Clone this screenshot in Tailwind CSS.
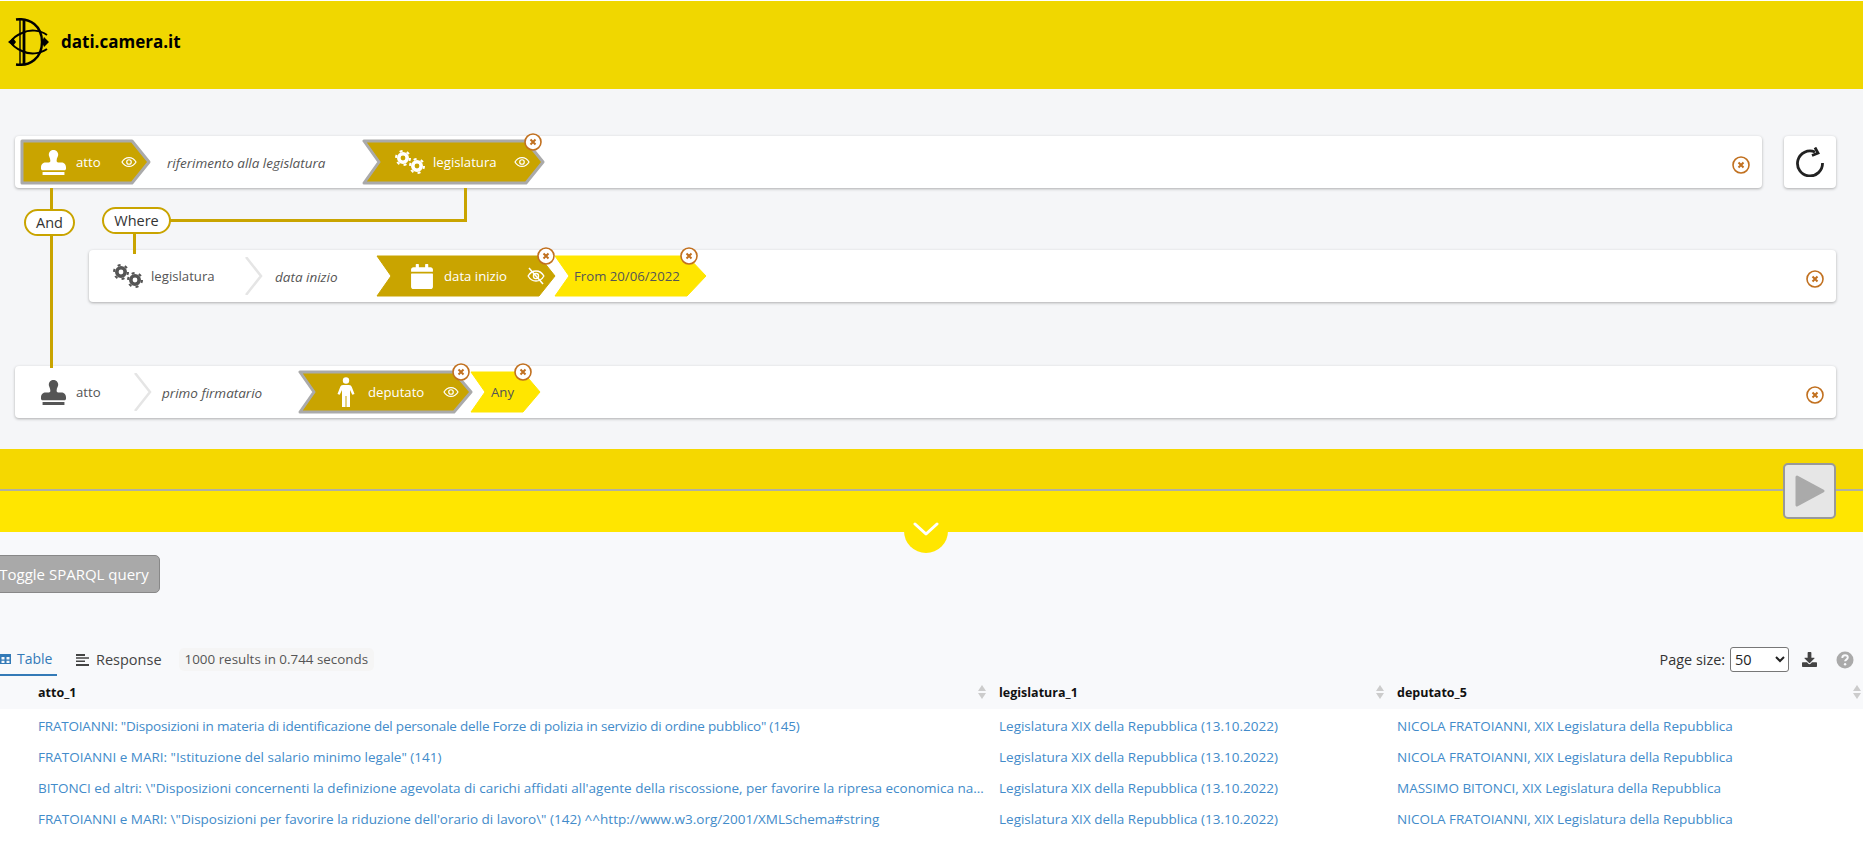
<!DOCTYPE html>
<html lang="en">
<head>
    <meta charset="UTF-8">
    <title>dati.camera.it</title>
    <script src="https://cdn.jsdelivr.net/npm/@tailwindcss/browser@4"></script>
</head>
<body class="h-[855px] overflow-hidden bg-white font-['Open_Sans',sans-serif] text-[13.2px] text-[#555]">
    <!-- shared icons -->
    <svg class="hidden">
        <symbol id="stamp" viewBox="0 0 512 512"><path d="M32 512h448v-64H32v64zm384-256h-66.56c-16.26 0-29.44-13.18-29.44-29.44v-9.46c0-27.37 8.88-53.41 21.46-77.72 9.11-17.61 12.9-38.39 9.05-60.42-6.77-38.78-38.47-70.7-77.26-77.45C212.62-9.04 160 37.33 160 96c0 14.16 3.12 27.54 8.69 39.58C182.02 164.43 192 194.7 192 226.49v.07c0 16.26-13.18 29.44-29.44 29.44H96c-53.02 0-96 42.98-96 96v32c0 17.67 14.33 32 32 32h448c17.67 0 32-14.33 32-32v-32c0-53.02-42.98-96-96-96z"/></symbol>
        <symbol id="cogs" viewBox="0 0 30 24">
            <g fill="none" stroke="currentColor">
                <circle cx="8" cy="8" r="4.200" stroke-width="3.600"/>
                <circle cx="8" cy="8" r="7" stroke-width="2" stroke-dasharray="3 4.330"/>
                <circle cx="22" cy="16" r="4.200" stroke-width="3.600"/>
                <circle cx="22" cy="16" r="7" stroke-width="2" stroke-dasharray="3 4.330"/>
            </g>
        </symbol>
        <symbol id="calendar" viewBox="0 0 448 512"><path d="M12 192h424c6.600 0 12 5.400 12 12v260c0 26.500-21.500 48-48 48H48c-26.500 0-48-21.500-48-48V204c0-6.600 5.400-12 12-12zm436-44v-36c0-26.500-21.500-48-48-48h-48V12c0-6.600-5.400-12-12-12h-40c-6.600 0-12 5.400-12 12v52H160V12c0-6.600-5.400-12-12-12h-40c-6.600 0-12 5.400-12 12v52H48C21.500 64 0 85.500 0 112v36c0 6.600 5.400 12 12 12h424c6.600 0 12-5.400 12-12z"/></symbol>
        <symbol id="person" viewBox="0 0 18 30">
            <circle cx="9" cy="3.500" r="3.200"/>
            <path d="M6 8h6c1.500 0 2.300.8 2.800 2l2.700 7-2.200.8L13 13v17H9.500V19h-1v11H5V13l-2.300 4.800L.5 17l2.700-7C3.700 8.800 4.500 8 6 8z"/>
        </symbol>
        <symbol id="eye" viewBox="0 0 24 24" fill="none" stroke="currentColor" stroke-width="1.800">
            <path d="M1.500 12C4 7.500 7.800 5.300 12 5.300s8 2.200 10.500 6.700C20 16.500 16.200 18.700 12 18.700S4 16.500 1.500 12z"/>
            <circle cx="12" cy="12" r="3.400"/>
        </symbol>
        <symbol id="close" viewBox="0 0 18 18">
            <circle cx="9" cy="9" r="8" fill="#fff" stroke="#c1701f" stroke-width="1.600"/>
            <path d="M6.500 6.500l5 5m0-5l-5 5" stroke="#c1701f" stroke-width="2" fill="none"/>
        </symbol>
    </svg>

    <div class="flex h-full flex-col">
        <!-- header -->
        <header class="mt-px flex h-[88px] shrink-0 items-center bg-[#f0d700] pl-2 pb-[6px]">
            <svg class="h-[48px] w-[41px] text-black" viewBox="0 0 41 48" fill="none" stroke="currentColor">
                <path d="M8 1.500C22 -.5 34 8 34 24S22 48.500 8 46.500" stroke-width="2.400"/>
                <path d="M12 2v44" stroke-width="1.400"/>
                <path d="M16 1.500v45" stroke-width="2.800"/>
                <path d="M39 17C32 12 22 11 14 15 7 18 4 21 3 24c1 3 4 6 11 9 8 4 18 3 25-2" stroke-width="2"/>
                <path d="M0 24l5-4 3 4-3 4zM41 24l-5-5-2 5 2 5z" fill="currentColor" stroke="none"/>
            </svg>
            <span class="ml-[12px] text-[17px] font-bold text-black">dati.camera.it</span>
        </header>

        <!-- query builder -->
        <section class="relative h-[360px] shrink-0 bg-[#f5f6f8] pt-[47px]">
            <!-- connectors -->
            <div class="absolute left-[50px] top-[99px] h-[180px] w-[3px] bg-[#c9a400]"></div>
            <div class="absolute left-[133px] top-[145px] h-[20px] w-[3px] bg-[#c9a400]"></div>
            <div class="absolute left-[170px] top-[130px] h-[3px] w-[297px] bg-[#c9a400]"></div>
            <div class="absolute left-[464px] top-[99px] h-[34px] w-[3px] bg-[#c9a400]"></div>
            <div class="absolute left-[24px] top-[120px] z-10 flex h-[27px] w-[51px] items-center justify-center rounded-[14px] border-2 border-[#c9a400] bg-white text-[14.5px] text-[#333]">And</div>
            <div class="absolute left-[102px] top-[118px] z-10 flex h-[27px] w-[69px] items-center justify-center rounded-[14px] border-2 border-[#c9a400] bg-white text-[14.5px] text-[#333]">Where</div>

            <!-- row 1 -->
            <div class="flex">
                <div class="ml-[15px] flex h-[52px] w-[1747px] items-center rounded-[4px] bg-white pl-[5px] shadow-[0_1px_3px_rgba(0,0,0,0.3)]">
                    <div class="relative h-[46px] w-[131px] shrink-0 text-white">
                        <svg class="absolute inset-0 h-full w-full" viewBox="0 0 131 46"><path d="M2 2H112L129 23 112 44H2Z" fill="#c9a400" stroke="#aaa" stroke-width="3" stroke-linejoin="round"/></svg>
                        <div class="relative flex h-full items-center">
                            <svg class="ml-[21px] h-[25px] w-[25px]" fill="currentColor"><use href="#stamp"/></svg>
                            <span class="ml-[10px] w-[45px] pt-[2px]">atto</span>
                            <svg class="h-[16px] w-[16px]"><use href="#eye"/></svg>
                        </div>
                    </div>
                    <span class="w-[211px] shrink-0 pl-[16px] pt-[2px] text-[13.5px] italic">riferimento alla legislatura</span>
                    <div class="relative h-[46px] w-[183px] shrink-0 text-white">
                        <svg class="absolute inset-0 h-full w-full" viewBox="0 0 183 46"><path d="M2 2H164L181 23 164 44H2L17 23Z" fill="#c9a400" stroke="#aaa" stroke-width="3" stroke-linejoin="round"/></svg>
                        <div class="relative flex h-full items-center">
                            <svg class="ml-[33px] h-[24px] w-[30px]"><use href="#cogs"/></svg>
                            <span class="ml-[8px] w-[81px] pt-[2px]">legislatura</span>
                            <svg class="h-[16px] w-[16px]"><use href="#eye"/></svg>
                        </div>
                        <svg class="absolute -top-[6px] left-[162px] h-[18px] w-[18px]"><use href="#close"/></svg>
                    </div>
                    <svg class="ml-auto mr-[12px] mt-[6px] h-[18px] w-[18px]"><use href="#close"/></svg>
                </div>
                <div class="ml-[22px] flex h-[52px] w-[52px] items-center justify-center rounded-[4px] bg-white shadow-[0_1px_3px_rgba(0,0,0,0.3)]">
                    <svg class="h-[30px] w-[30px]" viewBox="0 0 30 30" fill="none" stroke="#222" stroke-width="2.800">
                        <path d="M27.500 16A12.500 12.500 0 1 1 20 5"/>
                        <path d="M20 .5l3 5.500-6 2.500"/>
                    </svg>
                </div>
            </div>

            <!-- row 2 -->
            <div class="ml-[89px] mt-[62px] flex h-[52px] w-[1747px] items-center rounded-[4px] bg-white pl-[24px] shadow-[0_1px_3px_rgba(0,0,0,0.3)]">
                <svg class="h-[24px] w-[30px] shrink-0 text-[#555]"><use href="#cogs"/></svg>
                <span class="ml-[8px] w-[94px] shrink-0 pt-[2px]">legislatura</span>
                <svg class="h-[38px] w-[18px] shrink-0" viewBox="0 0 18 38" fill="none" stroke="#e5e5e5" stroke-width="2.500"><path d="M1 0L16 19 1 38"/></svg>
                <span class="ml-[12px] w-[101px] shrink-0 pt-[2px] text-[13.5px] italic">data inizio</span>
                <div class="relative h-[42px] w-[180px] shrink-0 text-white">
                    <svg class="absolute inset-0 h-full w-full" viewBox="0 0 180 42"><path d="M1 1H163L179 21 163 41H1L15 21Z" fill="#c9a400" stroke="#c9a400" stroke-linejoin="round"/></svg>
                    <div class="relative flex h-full items-center">
                        <svg class="ml-[35px] h-[25px] w-[22px]" fill="currentColor"><use href="#calendar"/></svg>
                        <span class="ml-[11px] w-[83px] pt-[2px]">data inizio</span>
                        <svg class="h-[18px] w-[18px]" fill="none" stroke="currentColor"><use href="#eye"/><path d="M2 1l14 16" stroke-width="1.500"/></svg>
                    </div>
                    <svg class="absolute -top-[8px] left-[161px] h-[18px] w-[18px]"><use href="#close"/></svg>
                </div>
                <div class="relative -ml-[2px] h-[42px] w-[153px] shrink-0">
                    <svg class="absolute inset-0 h-full w-full" viewBox="0 0 153 42"><path d="M1 1H133L152 21 133 41H1L15 21Z" fill="#ffe600" stroke="#ffe600" stroke-linejoin="round"/></svg>
                    <span class="relative flex h-full items-center pl-[20px] pt-[2px]">From 20/06/2022</span>
                    <svg class="absolute -top-[8px] left-[126px] h-[18px] w-[18px]"><use href="#close"/></svg>
                </div>
                <svg class="ml-auto mr-[12px] mt-[6px] h-[18px] w-[18px]"><use href="#close"/></svg>
            </div>

            <!-- row 3 -->
            <div class="ml-[15px] mt-[64px] flex h-[52px] w-[1821px] items-center rounded-[4px] bg-white pl-[26px] shadow-[0_1px_3px_rgba(0,0,0,0.3)]">
                <svg class="h-[25px] w-[25px] shrink-0 text-[#555]" fill="currentColor"><use href="#stamp"/></svg>
                <span class="ml-[10px] w-[58px] shrink-0 pt-[2px]">atto</span>
                <svg class="h-[38px] w-[18px] shrink-0" viewBox="0 0 18 38" fill="none" stroke="#e5e5e5" stroke-width="2.500"><path d="M1 0L16 19 1 38"/></svg>
                <span class="ml-[10px] w-[136px] shrink-0 pt-[2px] text-[13.5px] italic">primo firmatario</span>
                <div class="relative h-[44px] w-[175px] shrink-0 text-white">
                    <svg class="absolute inset-0 h-full w-full" viewBox="0 0 175 44"><path d="M2 2H156L173 22 156 42H2L16 22Z" fill="#c9a400" stroke="#aaa" stroke-width="3" stroke-linejoin="round"/></svg>
                    <div class="relative flex h-full items-center">
                        <svg class="ml-[39px] h-[30px] w-[18px]" fill="currentColor"><use href="#person"/></svg>
                        <span class="ml-[13px] w-[75px] pt-[2px]">deputato</span>
                        <svg class="h-[16px] w-[16px]"><use href="#eye"/></svg>
                    </div>
                    <svg class="absolute -top-[7px] left-[154px] h-[18px] w-[18px]"><use href="#close"/></svg>
                </div>
                <div class="relative -ml-[3px] h-[42px] w-[71px] shrink-0">
                    <svg class="absolute inset-0 h-full w-full" viewBox="0 0 71 42"><path d="M1 1H53L70 21 53 41H1L15 21Z" fill="#ffe600" stroke="#ffe600" stroke-linejoin="round"/></svg>
                    <span class="relative flex h-full items-center pl-[21px] pt-[2px]">Any</span>
                    <svg class="absolute -top-[8px] left-[44px] h-[18px] w-[18px]"><use href="#close"/></svg>
                </div>
                <svg class="ml-auto mr-[12px] mt-[6px] h-[18px] w-[18px]"><use href="#close"/></svg>
            </div>
        </section>

        <!-- run band -->
        <div class="relative shrink-0">
            <div class="h-[42px] border-b-2 border-[#b0b0a0] bg-[#f5d800]"></div>
            <div class="h-[41px] bg-[#ffe600]"></div>
            <button class="absolute left-[1783px] top-[14px] flex h-[56px] w-[53px] items-center justify-center rounded-[5px] border-2 border-[#999] bg-[#e6e6e6]">
                <svg class="h-[34px] w-[32px]" viewBox="0 0 32 34"><path d="M3 3L29 17 3 31Z" fill="#aaa" stroke="#aaa" stroke-width="3" stroke-linejoin="round"/></svg>
            </button>
            <div class="absolute left-[904px] top-[60px] flex h-[44px] w-[44px] items-start justify-center rounded-full bg-[#ffe600] pt-[13px]">
                <svg class="h-[14px] w-[26px]" viewBox="0 0 26 14" fill="none" stroke="#fff" stroke-width="3" stroke-linecap="round" stroke-linejoin="round"><path d="M2 2l11 10L24 2"/></svg>
            </div>
        </div>

        <!-- results -->
        <section class="flex min-h-0 flex-1 flex-col bg-[#f8f9fb] pt-[23px]">
            <button class="-ml-[12px] h-[38px] w-[172px] whitespace-nowrap rounded-[5px] border border-[#888] bg-[#a9a9a9] text-[15px] text-white">Toggle SPARQL query</button>

            <div class="mt-[51px] flex h-[33px] shrink-0 items-center pb-[2px] text-[14px]">
                <div class="flex h-[32px] w-[57px] items-center border-b-2 border-[#337ab7] text-[#337ab7]">
                    <svg class="h-[12px] w-[11px]" viewBox="0 0 11 12" fill="currentColor"><path d="M0 1h11v10H0zm1.500 3v2.500h3V4zm5 0v2.500h3V4zm-5 3.800V10h3V7.800zm5 0V10h3V7.800z" fill-rule="evenodd"/></svg>
                    <span class="ml-[6px]">Table</span>
                </div>
                <div class="ml-[19px] flex items-center text-[#444]">
                    <svg class="h-[12px] w-[13px]" viewBox="0 0 13 12" fill="currentColor"><path d="M0 0h9v2H0zM0 3.300h13v1.500H0zM0 6.500h9v1.500H0zM0 10h13v2H0z"/></svg>
                    <span class="ml-[7px] text-[14.5px]">Response</span>
                </div>
                <span class="ml-[17px] rounded-[5px] bg-[#f5f5f5] px-[6px] py-[1px] text-[13.4px] text-[#555]">1000 results in 0.744 seconds</span>
                <span class="ml-auto text-[14.4px] text-[#333]">Page size:</span>
                <select class="ml-[5px] h-[25px] w-[59px] rounded-[3px] border border-[#777] bg-white text-[14.5px] text-[#222]"><option>50</option></select>
                <svg class="ml-[13px] h-[15px] w-[15px] text-[#444]" viewBox="0 0 512 512" fill="currentColor"><path d="M216 0h80c13.300 0 24 10.700 24 24v168h87.700c17.800 0 26.700 21.500 14.100 34.100L269.700 378.300c-7.500 7.500-19.800 7.500-27.300 0L90.100 226.100c-12.600-12.600-3.700-34.100 14.100-34.100H192V24c0-13.300 10.700-24 24-24zm296 376v112c0 13.300-10.700 24-24 24H24c-13.300 0-24-10.700-24-24V376c0-13.300 10.700-24 24-24h146.700l49 49c20.100 20.100 52.500 20.100 72.600 0l49-49H488c13.300 0 24 10.700 24 24z"/></svg>
                <svg class="ml-[19px] mr-[9px] h-[18px] w-[18px] text-[#aaa]" viewBox="0 0 18 18"><circle cx="9" cy="9" r="8.500" fill="currentColor"/><path d="M6.300 7c0-1.700 1.200-2.700 2.800-2.700s2.700 1 2.700 2.300c0 2-2.700 2-2.700 3.700" fill="none" stroke="#f8f9fb" stroke-width="1.900"/><circle cx="9.100" cy="13.200" r="1.200" fill="#f8f9fb"/></svg>
            </div>

            <div class="flex-1 bg-white">
                <table class="w-full table-fixed text-[13.5px]">
                    <colgroup><col class="w-[991px]"><col class="w-[398px]"><col></colgroup>
                    <thead class="bg-[#f8f9fb] text-left text-[#111]">
                        <tr class="h-[32px]">
                            <th class="relative pl-[38px] pt-[1px] text-[12.5px] font-bold">atto_1<span class="absolute right-[5px] top-[8px] flex flex-col gap-[2px]"><i class="h-0 w-0 border-x-[4px] border-b-[6px] border-x-transparent border-b-[#ccc]"></i><i class="h-0 w-0 border-x-[4px] border-t-[6px] border-x-transparent border-t-[#ccc]"></i></span></th>
                            <th class="relative pl-[8px] pt-[1px] text-[12.5px] font-bold">legislatura_1<span class="absolute right-[5px] top-[8px] flex flex-col gap-[2px]"><i class="h-0 w-0 border-x-[4px] border-b-[6px] border-x-transparent border-b-[#ccc]"></i><i class="h-0 w-0 border-x-[4px] border-t-[6px] border-x-transparent border-t-[#ccc]"></i></span></th>
                            <th class="relative pl-[8px] pt-[1px] text-[12.5px] font-bold">deputato_5<span class="absolute right-[2px] top-[8px] flex flex-col gap-[2px]"><i class="h-0 w-0 border-x-[4px] border-b-[6px] border-x-transparent border-b-[#ccc]"></i><i class="h-0 w-0 border-x-[4px] border-t-[6px] border-x-transparent border-t-[#ccc]"></i></span></th>
                        </tr>
                    </thead>
                    <tbody class="text-[#428bca]">
                        <tr class="h-[31px]">
                            <td class="truncate pl-[38px] pr-[7px] pt-[3px] tracking-[-0.2px]">FRATOIANNI: "Disposizioni in materia di identificazione del personale delle Forze di polizia in servizio di ordine pubblico" (145)</td>
                            <td class="truncate pl-[8px] pt-[3px]">Legislatura XIX della Repubblica (13.10.2022)</td>
                            <td class="truncate pl-[8px] pt-[3px]">NICOLA FRATOIANNI, XIX Legislatura della Repubblica</td>
                        </tr>
                        <tr class="h-[31px]">
                            <td class="truncate pl-[38px] pr-[7px] pt-[3px]">FRATOIANNI e MARI: "Istituzione del salario minimo legale" (141)</td>
                            <td class="truncate pl-[8px] pt-[3px]">Legislatura XIX della Repubblica (13.10.2022)</td>
                            <td class="truncate pl-[8px] pt-[3px]">NICOLA FRATOIANNI, XIX Legislatura della Repubblica</td>
                        </tr>
                        <tr class="h-[31px]">
                            <td class="truncate pl-[38px] pr-[7px] pt-[3px]">BITONCI ed altri: \"Disposizioni concernenti la definizione agevolata di carichi affidati all'agente della riscossione, per favorire la ripresa economica nazionale\" (139)</td>
                            <td class="truncate pl-[8px] pt-[3px]">Legislatura XIX della Repubblica (13.10.2022)</td>
                            <td class="truncate pl-[8px] pt-[3px]">MASSIMO BITONCI, XIX Legislatura della Repubblica</td>
                        </tr>
                        <tr class="h-[31px]">
                            <td class="truncate pl-[38px] pr-[7px] pt-[3px]">FRATOIANNI e MARI: \"Disposizioni per favorire la riduzione dell'orario di lavoro\" (142) ^^http://www.w3.org/2001/XMLSchema#string</td>
                            <td class="truncate pl-[8px] pt-[3px]">Legislatura XIX della Repubblica (13.10.2022)</td>
                            <td class="truncate pl-[8px] pt-[3px]">NICOLA FRATOIANNI, XIX Legislatura della Repubblica</td>
                        </tr>
                    </tbody>
                </table>
            </div>
        </section>
    </div>
</body>
</html>
